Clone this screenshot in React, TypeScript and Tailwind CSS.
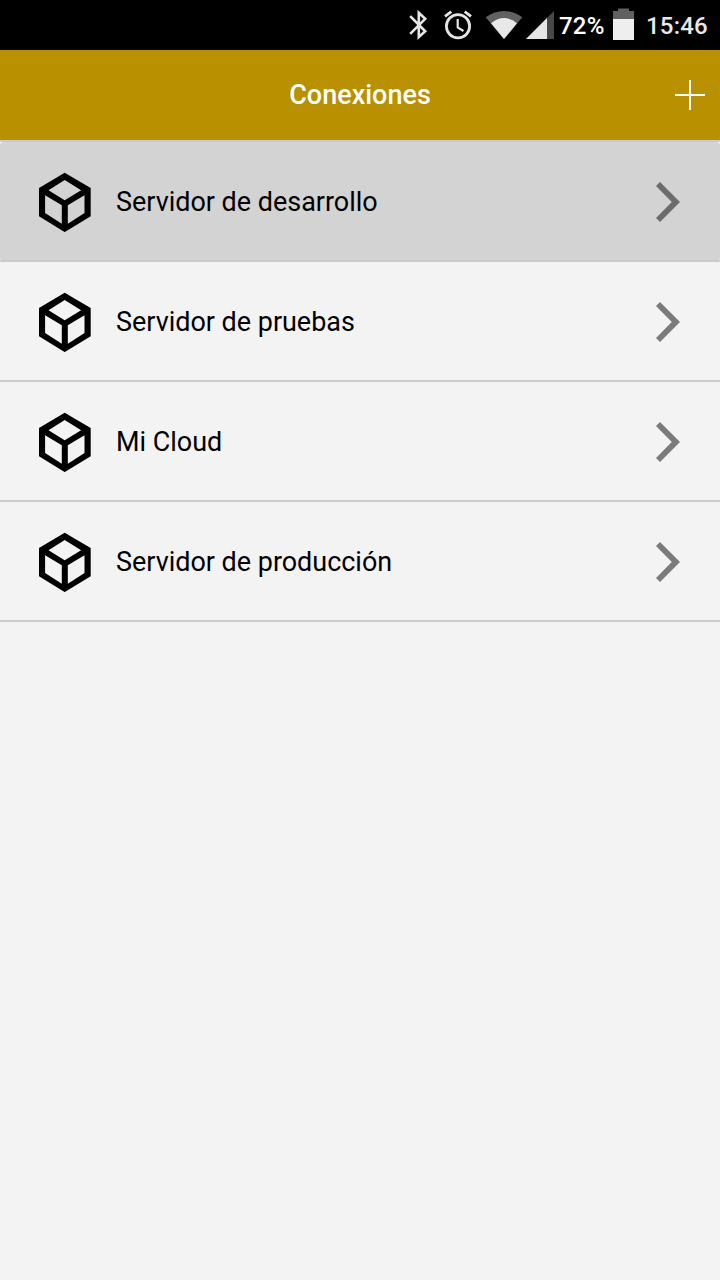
const connections = [
  { name: 'Servidor de desarrollo', active: true },
  { name: 'Servidor de pruebas', active: false },
  { name: 'Mi Cloud', active: false },
  { name: 'Servidor de producción', active: false },
];

function CubeIcon() {
  return (
    <svg className="h-[60px] w-[52px] shrink-0" viewBox="0 0 52 60" fill="#000" fillRule="evenodd">
      <path d="M25.7 0.8 51.7 16V44.2L25.7 60.1 0 44.2V16ZM25.7 7.9 9.5 18.2 25.7 28.2 42.1 18.2ZM6.1 23.2V41.1L22.8 51.8V33.2ZM45.5 23.2V41.1L28.8 51.8V33.2Z" />
    </svg>
  );
}

function StatusBar() {
  return (
    <div className="flex h-[50px] shrink-0 items-center bg-black text-[#e8e8e8]">
      <svg className="ml-[400px] h-[50px] w-[157px] shrink-0" viewBox="400 0 157 50">
        <g fill="none" stroke="#e5e5e5">
          <path d="M410.2 16.2 425.2 31.3 418.8 37V12.8L425.2 18.8 410.2 33.8" strokeWidth="2.6" />
          <circle cx="458" cy="26.3" r="11.6" strokeWidth="2.8" />
          <path d="M457.7 19V27.5L463.5 31" strokeWidth="2.2" />
          <path d="M445 16.3 451.3 11.7M471 16.3 464.7 11.7" strokeWidth="2.9" />
        </g>
        <path d="M485.7 17.3Q504 4.6 522.3 17.3L504 39Z" fill="#606060" />
        <path d="M491 23.3Q504 12.8 517 23.3L504 39Z" fill="#e8e8e8" />
        <path d="M526 39 554 11V39Z" fill="#484848" />
        <path d="M526 39 547 18V39Z" fill="#e5e5e5" />
      </svg>
      <span className="ml-[2px] w-[54px] pt-[2px] text-[24px] font-medium tracking-[0.2px] text-white">72%</span>
      <svg className="h-[50px] w-[21px] shrink-0" viewBox="613 0 21 50">
        <path d="M613 11H618V8.5H629V11H634V20H613Z" fill="#606060" />
        <path d="M613 19H634V40H613Z" fill="#eeeeee" />
      </svg>
      <span className="ml-3 pt-[2px] text-[24px] font-medium tracking-[0.2px]">15:46</span>
    </div>
  );
}

export default function App() {
  return (
    <div className="flex h-[1280px] w-[720px] flex-col overflow-hidden bg-[#f3f3f3] font-['Roboto',sans-serif] text-black">
      <StatusBar />
      <header className="grid h-[90px] shrink-0 grid-cols-[1fr_auto_1fr] items-center bg-[#b89000] px-[15px] text-white">
        <h1 className="col-start-2 text-[27px] font-medium">Conexiones</h1>
        <button className="justify-self-end" aria-label="Añadir">
          <svg className="block size-[30px]" viewBox="0 0 30 30">
            <path d="M15 0V30M0 15H30" stroke="#fff" strokeWidth="2" />
          </svg>
        </button>
      </header>
      <ul className="border-t-2 border-[#cbcbcf]">
        {connections.map((item) => (
          <li key={item.name} className="h-[120px] border-b-2 border-[#cbcbcf]">
            <div
              className={
                item.active
                  ? 'flex h-full items-center rounded-t-[4px] rounded-b-[2px] bg-[#d3d3d3] pt-[2px] pr-10 pl-[39px]'
                  : 'flex h-full items-center pt-[2px] pr-10 pl-[39px]'
              }
            >
              <CubeIcon />
              <span className="ml-[25px] flex-1 text-[26.95px]">{item.name}</span>
              <svg className="h-10 w-6 shrink-0" viewBox="0 0 24 40" fill={item.active ? '#6c6c6c' : '#7b7b7b'}>
                <path d="M4 0 24 20 4 40 0 36 15.8 20 0 4Z" />
              </svg>
            </div>
          </li>
        ))}
      </ul>
    </div>
  );
}
